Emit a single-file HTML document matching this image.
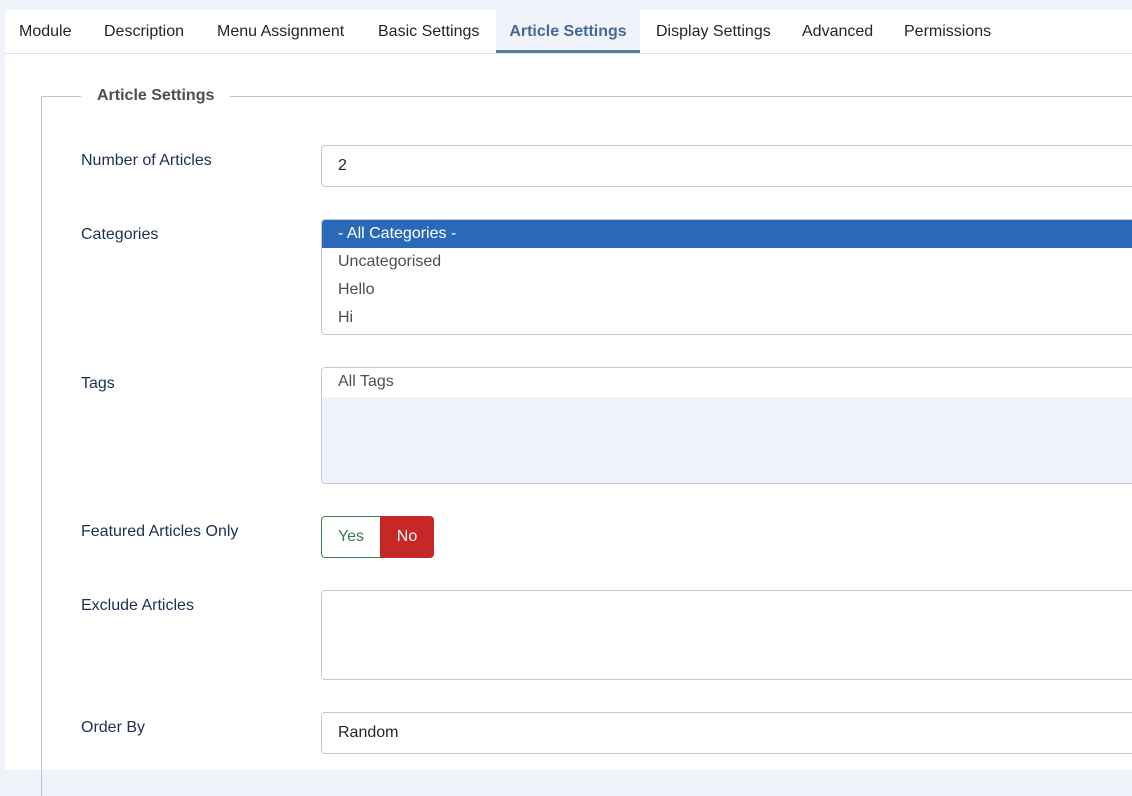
<!DOCTYPE html>
<html><head><style>
*{box-sizing:border-box;margin:0;padding:0}
body{width:1132px;height:756px;overflow:hidden;background:#eef3f9;font-family:"Liberation Sans",sans-serif;font-size:16px;position:relative}
.card{position:absolute;left:5px;top:10px;width:1140px;height:760px;background:#fff;border-radius:4px 0 0 0}
.tabs{position:absolute;left:0;top:0;height:44px;width:100%;border-bottom:1px solid #dfe3e8}
.tab{position:absolute;top:0;height:43px;line-height:43px;color:#22262a;font-size:16px}
.tab.act{background:#f0f4fa;color:#476796;font-weight:bold;border-bottom:3px solid #5a7aa8;text-align:center}
.fs{position:absolute;left:36px;top:86px;width:1200px;height:700px;border-left:1px solid #b9c7da;border-top:1px solid #b9c7da}
.leg{position:absolute;left:76px;top:77px;background:#fff;padding:0 16px;font-weight:bold;color:#4a4f55;font-size:16px;line-height:18px}
.lbl{position:absolute;left:76px;color:#1c2f52;font-size:16px}
.inp{position:absolute;left:316px;width:900px;border:1px solid #c0c9d6;border-radius:4px;background:#fff;color:#22262a}
.opt{height:28px;line-height:28px;padding-left:16px;color:#4a4f55}
</style></head><body>
<div class="card">
<div class="tabs">
<div class="tab" style="left:14px">Module</div>
<div class="tab" style="left:99px">Description</div>
<div class="tab" style="left:212px">Menu Assignment</div>
<div class="tab" style="left:373px">Basic Settings</div>
<div class="tab act" style="left:491px;width:144px">Article Settings</div>
<div class="tab" style="left:651px">Display Settings</div>
<div class="tab" style="left:797px">Advanced</div>
<div class="tab" style="left:899px">Permissions</div>
</div>
<div class="fs"></div>
<div class="leg">Article Settings</div>
<div class="lbl" style="top:142px">Number of Articles</div>
<div class="inp" style="top:135px;height:42px;line-height:40px;padding-left:16px">2</div>
<div class="lbl" style="top:216px">Categories</div>
<div class="inp" style="top:209px;height:116px;overflow:hidden">
<div class="opt" style="background:#2a69b8;color:#fff;height:28px">- All Categories -</div>
<div class="opt">Uncategorised</div>
<div class="opt">Hello</div>
<div class="opt">Hi</div>
</div>
<div class="lbl" style="top:365px">Tags</div>
<div class="inp" style="top:357px;height:117px;background:#eff4fb;overflow:hidden">
<div class="opt" style="background:#fff;height:29px">All Tags</div>
</div>
<div class="lbl" style="top:513px">Featured Articles Only</div>
<div style="position:absolute;left:316px;top:506px;width:113px;height:42px;border-radius:4px;overflow:hidden;display:flex">
<div style="width:59px;border:1px solid #3d7a4a;border-right:none;border-radius:4px 0 0 4px;color:#3d7a4a;text-align:center;line-height:40px">Yes</div>
<div style="width:54px;background:#c52827;color:#fff;text-align:center;line-height:42px">No</div>
</div>
<div class="lbl" style="top:587px">Exclude Articles</div>
<div class="inp" style="top:580px;height:90px"></div>
<div class="lbl" style="top:709px">Order By</div>
<div class="inp" style="top:702px;height:42px;line-height:40px;padding-left:16px">Random</div>
</div>
</body></html>
